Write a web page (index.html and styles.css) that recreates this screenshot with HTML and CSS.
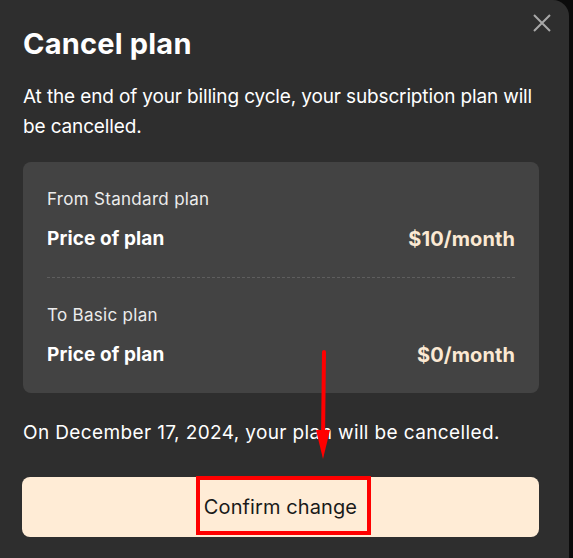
FILE: index.html
```html
<!DOCTYPE html>
<html>
<head>
<meta charset="utf-8">
<link rel="stylesheet" href="styles.css">
</head>
<body>
<div class="modal">
  <button class="close" aria-label="Close">
    <svg width="20" height="20" viewBox="0 0 20 20"><path d="M2 2L18 18M18 2L2 18" stroke="#a8a8a8" stroke-width="2" fill="none"/></svg>
  </button>
  <h1 class="title">Cancel plan</h1>
  <p class="desc">At the end of your billing cycle, your subscription plan will be cancelled.</p>
  <div class="card">
    <div class="plan">
      <div class="plan-name">From Standard plan</div>
      <div class="row"><span class="label">Price of plan</span><span class="price">$10/month</span></div>
    </div>
    <div class="divider"></div>
    <div class="plan">
      <div class="plan-name">To Basic plan</div>
      <div class="row"><span class="label">Price of plan</span><span class="price">$0/month</span></div>
    </div>
  </div>
  <p class="note">On December 17, 2024, your plan will be cancelled.</p>
  <button class="confirm">Confirm change</button>

  <div class="anno-box"></div>
  <svg class="anno-arrow" width="30" height="120" viewBox="0 0 30 120">
    <path d="M15 2 L14 90" stroke="#ff0000" stroke-width="4" stroke-linecap="round" fill="none"/>
    <path d="M7 80 L21 80 L14 109 Z" fill="#ff0000"/>
  </svg>
</div>
</body>
</html>
```
FILE: styles.css
```css
html, body {
  margin: 0;
  padding: 0;
  background: #0b0b0b;
  width: 573px;
  height: 558px;
  overflow: hidden;
}
body {
  font-family: Inter, "Liberation Sans", Arial, sans-serif;
  color: #ffffff;
}
.modal {
  position: relative;
  width: 569px;
  height: 558px;
  background: #2e2e2e;
  border-top-right-radius: 16px;
  box-sizing: border-box;
  padding: 26px 30px 0 23px;
}
.close {
  position: absolute;
  top: 13px;
  right: 17px;
  background: none;
  border: 0;
  padding: 0;
  width: 20px;
  height: 20px;
  cursor: pointer;
}
.close svg { display: block; }
.title {
  margin: 0;
  font-size: 29px;
  font-weight: 700;
  line-height: 36px;
  letter-spacing: 0.2px;
}
.desc {
  margin: 20px 0 0;
  font-size: 19px;
  line-height: 30px;
  letter-spacing: -0.14px;
}
.card {
  margin-top: 20px;
  background: #434343;
  border-radius: 8px;
  padding: 25px 24px 26px;
}
.plan-name {
  font-size: 17px;
  line-height: 24px;
  color: #ececec;
  letter-spacing: 0.3px;
}
.row {
  display: flex;
  justify-content: space-between;
  align-items: center;
  margin-top: 16px;
  font-size: 19px;
  line-height: 24px;
  font-weight: 700;
  letter-spacing: 0.1px;
}
.price { color: #fbe9d3; font-size: 20px; }
.divider {
  border-top: 1px dashed #5e5e5e;
  margin: 26px 0 25px;
}
.note {
  margin: 25px 0 0;
  font-size: 19px;
  line-height: 30px;
  letter-spacing: 0.38px;
}
.confirm {
  display: block;
  width: 517px;
  height: 60px;
  margin: 29px 0 0 -1px;
  background: #ffecd6;
  border: 0;
  border-radius: 8px;
  font-family: Inter, "Liberation Sans", Arial, sans-serif;
  font-size: 20px;
  color: #1a1a1a;
  letter-spacing: 0.1px;
}
.anno-box {
  position: absolute;
  left: 196px;
  top: 476px;
  width: 167px;
  height: 51px;
  border: 4px solid #ff0000;
}
.anno-arrow {
  position: absolute;
  left: 309px;
  top: 350px;
}
```
